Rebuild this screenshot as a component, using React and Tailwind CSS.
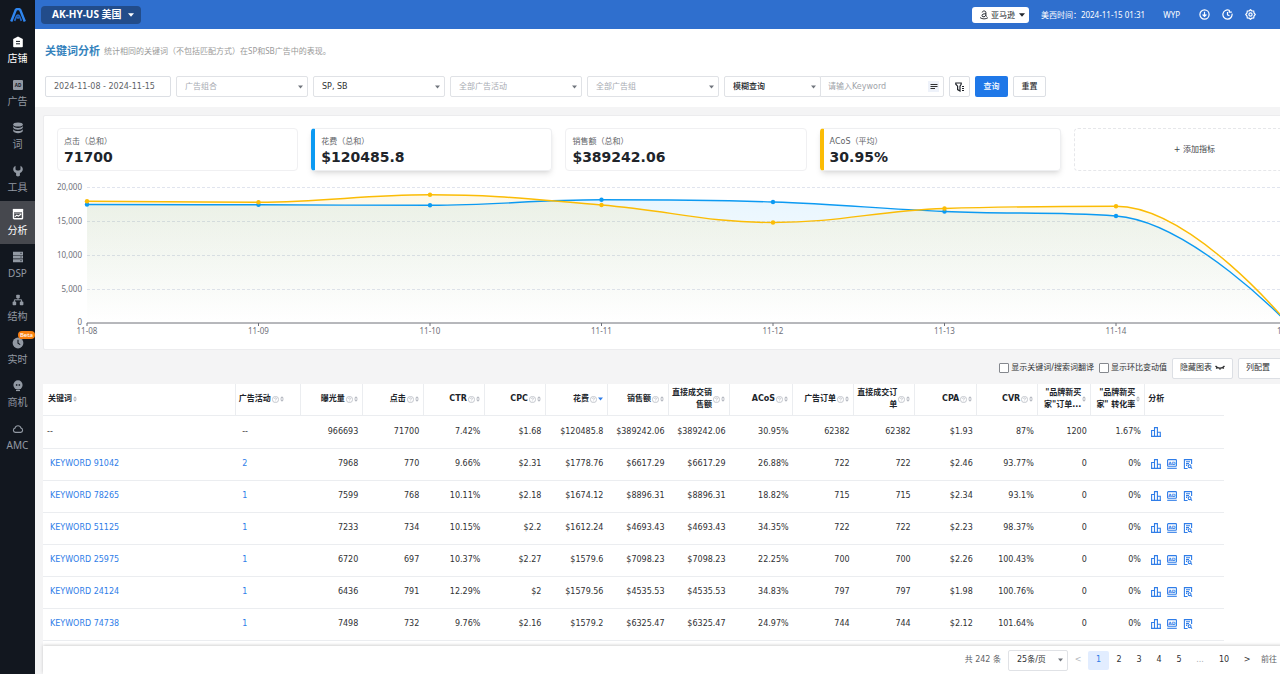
import React from "react";

const VERDANA = "font-['DejaVu_Sans','Noto_Sans_CJK_SC',sans-serif]";
const YAHEI = "font-['Noto_Sans','Noto_Sans_CJK_SC',sans-serif]";

/* ---------- icons ---------- */

const navIcons = {
  shop: (
    <>
      <path d="M6 .6 1.2 3v7.4c0 .4.3.8.8.8h8c.5 0 .8-.4.8-.8V3Z" fill="currentColor" />
      <path d="M4 5.4h4M4 7.8h4" stroke="#12171f" strokeWidth="1" />
    </>
  ),
  ad: (
    <>
      <rect x="1" y="1" width="10" height="10" rx="1" fill="currentColor" />
      <text x="6" y="7.8" fontSize="4.6" fontWeight="700" textAnchor="middle" fill="#12171f">AD</text>
    </>
  ),
  words: (
    <>
      <ellipse cx="6" cy="2.6" rx="4.8" ry="2" fill="currentColor" />
      <path d="M1.2 4c.8 1.3 2.6 1.9 4.8 1.9S10 5.300 10.800 4v1.800C10.300 7.100 8.300 7.800 6 7.800S1.700 7.100 1.200 5.800Z" fill="currentColor" />
      <path d="M1.200 7.200c.8 1.300 2.600 1.900 4.800 1.900s4-.6 4.800-1.900V9C10.300 10.400 8.300 11.200 6 11.200S1.700 10.400 1.200 9Z" fill="currentColor" />
    </>
  ),
  tools: (
    <path d="M3.500.8C2 1.500 1.200 2.800 1.200 4.200c0 1.800 1.200 3.200 2.900 3.700v2.400c0 .6.800 1.100 1.900 1.100s1.900-.5 1.900-1.100V7.900c1.700-.5 2.900-1.900 2.900-3.700 0-1.400-.8-2.700-2.300-3.400v3.600L7.200 5.400H4.800L3.500 4.400Z" fill="currentColor" />
  ),
  analysis: (
    <>
      <path d="M.8.900h10.400v2.200H.8Z" fill="currentColor" />
      <rect x="1.500" y="3.200" width="9" height="7.600" rx=".6" fill="none" stroke="currentColor" strokeWidth="1.400" />
      <path d="M2.500 5h7" stroke="currentColor" strokeWidth=".7" />
      <path d="m2.800 8.900 2-1.700 1.600 1 2.800-2.200" fill="none" stroke="currentColor" strokeWidth="1.100" />
    </>
  ),
  dsp: (
    <>
      <path d="M1 .8h10v3.100H1ZM1 4.500h10v3.100H1ZM1 8.200h10v3.100H1Z" fill="currentColor" />
      <path d="M8.300 2.300h1.400M8.300 6h1.400M8.300 9.700h1.400" stroke="#12171f" strokeWidth=".8" />
    </>
  ),
  structure: (
    <>
      <rect x="4.200" y=".8" width="3.600" height="3.400" rx=".8" fill="currentColor" />
      <rect x=".6" y="7.600" width="3.600" height="3.600" rx=".8" fill="currentColor" />
      <rect x="7.800" y="7.600" width="3.600" height="3.600" rx=".8" fill="currentColor" />
      <path d="M6 4v1.700M2.400 8V5.800h7.200V8" fill="none" stroke="currentColor" />
    </>
  ),
  realtime: (
    <>
      <circle cx="6" cy="6" r="5.400" fill="currentColor" />
      <path d="M6 2.800v3.400l2.200 1.400" fill="none" stroke="#12171f" strokeWidth="1.100" />
    </>
  ),
  chance: (
    <>
      <circle cx="6" cy="4.900" r="4.600" fill="currentColor" />
      <path d="M4 9.900h4v1.200H4Z" fill="currentColor" />
      <path d="M3.600 5 4.700 3.900 5.800 5 4.700 6.100ZM6.200 5l1.100-1.100L8.400 5 7.300 6.100Z" fill="#12171f" />
    </>
  ),
  cloud: (
    <path d="M3.300 9.400a2.200 2.200 0 0 1-.3-4.300 3.100 3.100 0 0 1 6 0 2.200 2.200 0 0 1-.3 4.300Z" fill="none" stroke="currentColor" strokeWidth="1.100" />
  ),
};

const navItems = [
  { icon: "shop", label: "店铺", tone: "text-white" },
  { icon: "ad", label: "广告", tone: "text-[#9299a3]" },
  { icon: "words", label: "词", tone: "text-[#9299a3]" },
  { icon: "tools", label: "工具", tone: "text-[#9299a3]" },
  { icon: "analysis", label: "分析", tone: "bg-[#46484e] text-white" },
  { icon: "dsp", label: "DSP", tone: "text-[#9299a3]" },
  { icon: "structure", label: "结构", tone: "text-[#9299a3]" },
  { icon: "realtime", label: "实时", tone: "text-[#9299a3]", badge: "Beta" },
  { icon: "chance", label: "商机", tone: "text-[#9299a3]" },
  { icon: "cloud", label: "AMC", tone: "text-[#9299a3]" },
];

function Caret({ className }) {
  return (
    <svg viewBox="0 0 6 4" className={className} aria-hidden="true">
      <path d="M0 .3h6L3 3.700Z" fill="currentColor" />
    </svg>
  );
}

function HelpIcon() {
  return (
    <svg viewBox="0 0 14 14" className="size-[7px] shrink-0 text-[#b4b8c0]" fill="none" stroke="currentColor" strokeWidth="1.500" aria-hidden="true">
      <circle cx="7" cy="7" r="6.200" />
      <path d="M5 5.600C5 4.400 5.900 3.700 7 3.700s2 .7 2 1.700c0 1.300-2 1.400-2 2.900M7 9.400v1.300" />
    </svg>
  );
}

function SortIcon({ active }) {
  return active ? (
    <Caret className="h-1 w-[5px] shrink-0 text-[#2f7de8]" />
  ) : (
    <svg viewBox="0 0 4 6" className="h-[6px] w-1 shrink-0 text-[#b4b8c0]" aria-hidden="true">
      <path d="M0 2.600 2 .3l2 2.300ZM0 3.400h4L2 5.700Z" fill="currentColor" />
    </svg>
  );
}

function BarsIcon() {
  return (
    <svg viewBox="0 0 10 10" className="size-[10px]" fill="none" stroke="currentColor" strokeWidth="1.100" aria-hidden="true">
      <path d="M.6 9.400V3.500h2.900v5.900M3.500 9.400V.6h2.900v8.800M6.400 5.300h2.900v4.100M0 9.400h10" />
    </svg>
  );
}

function AdBoardIcon() {
  return (
    <svg viewBox="0 0 10 10" className="size-[10px]" aria-hidden="true">
      <rect x=".6" y=".6" width="8.800" height="6.600" rx=".7" fill="none" stroke="currentColor" strokeWidth="1.100" />
      <text x="5" y="5.700" fontSize="4.600" fontWeight="700" textAnchor="middle" fill="currentColor">AD</text>
      <path d="M.2 9.300h9.600" stroke="currentColor" strokeWidth="1.100" />
    </svg>
  );
}

function DocSearchIcon() {
  return (
    <svg viewBox="0 0 10 10" className="size-[10px]" fill="none" stroke="currentColor" strokeWidth="1.100" aria-hidden="true">
      <path d="M4.600 9.500H1.400V.6h7.200v4.500M3 2.800h4M3 4.600h3M3 6.400h1.200" />
      <circle cx="6.600" cy="7.200" r="1.400" />
      <path d="m7.600 8.200 1.400 1.400" />
    </svg>
  );
}

/* ---------- chrome ---------- */

function Sidebar() {
  return (
    <nav className={`flex w-[35px] shrink-0 flex-col bg-[#12171f] ${YAHEI}`}>
      <a href="#home" aria-label="首页" className="flex h-[29px] items-center justify-center">
        <svg viewBox="0 0 16 14" className="h-[14px] w-4" fill="none" aria-hidden="true">
          <path d="M1.200 13.500 5.700 2Q6.300 1.100 7.400 1.100h1.200q1.100 0 1.700.9l4.500 11.500" stroke="#2f86f0" strokeWidth="2.400" />
          <path d="m4.600 12.800 2.100-5q1.300-1.500 2.600 0l2.100 5" stroke="#2368c8" strokeWidth="1.700" />
          <path d="M8 8.500v2.200" stroke="#2f86f0" strokeWidth="1.500" />
        </svg>
      </a>
      {navItems.map((n) => (
        <a
          key={n.label}
          href={`#${n.icon}`}
          className={`relative flex h-[43px] flex-col items-center justify-center gap-[3px] text-[10px] leading-[15px] ${n.tone}`}
        >
          <svg viewBox="0 0 12 12" className="size-3" aria-hidden="true">{navIcons[n.icon]}</svg>
          {n.label}
          {n.badge && (
            <span className="absolute top-[1px] right-0 rounded-full bg-[#f77f0e] px-[2px] text-[6px] leading-2 font-medium text-white">{n.badge}</span>
          )}
        </a>
      ))}
    </nav>
  );
}

function Header() {
  return (
    <header className={`flex h-[29px] shrink-0 items-center bg-[#2f6fce] pr-[81px] pl-[6px] text-[8px] text-white shadow-sm ${YAHEI}`}>
      <button className="flex h-[18px] items-center gap-[6px] rounded bg-[#224c8a] pr-[7px] pl-[11px] text-[10px] font-bold">
        AK-HY-US 美国
        <Caret className="h-1 w-[6px]" />
      </button>
      <button className="ml-auto flex h-4 items-center gap-[2px] rounded-[3px] bg-white px-1 pl-[7px] text-[#20252d]">
        <svg viewBox="0 0 10 10" className="size-[10px]" fill="none" stroke="currentColor" aria-hidden="true">
          <path d="M3.200 2.400C3.500 1.300 4.200 1 5.100 1c1.200 0 1.800.6 1.800 1.600v3.200l.7.8M6.900 3.800c-2.400-.1-3.900.4-3.900 1.800 0 1.700 3.100 1.700 3.900-.4" />
          <path d="M1 7.600c2.500 1.700 5.500 1.700 8 .1" strokeWidth=".9" />
        </svg>
        亚马逊
        <Caret className="ml-[2px] h-1 w-[6px]" />
      </button>
      <span className="ml-3 whitespace-pre">美西时间：2024-11-15 01:31</span>
      <span className="ml-[18px]">WYP</span>
      <div className="ml-[19px] flex gap-3">
        <button aria-label="下载">
          <svg viewBox="0 0 11 11" className="size-[11px]" fill="none" stroke="currentColor" strokeWidth="1.200" aria-hidden="true">
            <circle cx="5.500" cy="5.500" r="4.600" />
            <path d="M5.500 2.700v4.600M3.600 5.500l1.900 2 1.900-2" />
          </svg>
        </button>
        <button aria-label="历史">
          <svg viewBox="0 0 11 11" className="size-[11px]" fill="none" stroke="currentColor" strokeWidth="1.200" aria-hidden="true">
            <path d="M7.300 1.300a4.600 4.600 0 1 0 2.700 3.400M5.500 3v2.900l2 .9M7.300 1v2.200h2.500" />
          </svg>
        </button>
        <button aria-label="设置">
          <svg viewBox="0 0 11 11" className="size-[11px]" fill="none" stroke="currentColor" strokeWidth="1.200" aria-hidden="true">
            <path d="m5.500.7 1.300 1.100 1.900.2.300 1.900 1.300 1.600L9 7.100 8.700 9l-1.900.2-1.300 1.100-1.300-1.100L2.300 9 2 7.100.7 5.500 2 3.900 2.300 2l1.900-.2Z" />
            <circle cx="5.500" cy="5.500" r="1.600" />
          </svg>
        </button>
      </div>
    </header>
  );
}

/* ---------- filters ---------- */

function FilterSelect({ label, value, tone, size }) {
  return (
    <div className={`relative flex h-[21px] items-center ${size}`}>
      <select
        aria-label={label}
        defaultValue={value}
        className={`h-full w-full appearance-none rounded-[2px] border border-[#e0e2e6] bg-white pr-4 pl-2 text-[8px] outline-none ${tone}`}
      >
        <option>{value}</option>
      </select>
      <Caret className="pointer-events-none absolute right-[5px] h-1 w-[5px] text-[#70757d]" />
    </div>
  );
}

function Filters() {
  return (
    <section className="bg-white px-[10px] pt-[14px] pb-[10px]">
      <div className={`flex h-4 items-center gap-1 ${YAHEI}`}>
        <h1 className="text-[11px] font-bold text-[#3583bd]">关键词分析</h1>
        <p className="text-[8px] text-[#999]">统计相同的关键词（不包括匹配方式）在SP和SB广告中的表现。</p>
      </div>
      <div className="mt-[17px] flex gap-[5px] text-[8px]">
        <input
          aria-label="日期范围"
          defaultValue="2024-11-08 - 2024-11-15"
          className="h-[21px] w-[126px] rounded-[2px] border border-[#dcdfe4] bg-white px-2 text-[#606266] outline-none"
        />
        <FilterSelect label="广告组合" value="广告组合" tone="text-[#a8abb2]" size="w-[132px]" />
        <FilterSelect label="广告类型" value="SP, SB" tone="text-[#303133]" size="w-[132px]" />
        <FilterSelect label="广告活动" value="全部广告活动" tone="text-[#a8abb2]" size="w-[132px]" />
        <FilterSelect label="广告组" value="全部广告组" tone="text-[#a8abb2]" size="w-[132px]" />
        <div className="flex">
          <FilterSelect label="查询方式" value="模糊查询" tone="font-medium text-[#20242a]" size="w-[97px]" />
          <div className="-ml-px flex h-[21px] w-[124px] items-center rounded-r-[2px] border border-[#e0e2e6] pr-1 pl-[7px]">
            <input aria-label="关键词" placeholder="请输入Keyword" className="min-w-0 flex-1 outline-none placeholder:text-[#a0a3a9]" />
            <button aria-label="批量输入" className="flex size-[11px] items-center justify-center bg-[#eef2fa] text-[#303133]">
              <svg viewBox="0 0 8 8" className="size-2" stroke="currentColor" aria-hidden="true">
                <path d="M.5 1.500h7M.5 3.500h7M.5 5.500h4.500" />
              </svg>
            </button>
          </div>
        </div>
        <button aria-label="更多筛选" className="flex h-[21px] w-[21px] items-center justify-center rounded-[2px] border border-[#dcdfe4] text-[#20242a]">
          <svg viewBox="0 0 10 10" className="size-[10px]" fill="none" stroke="currentColor" strokeWidth="1.200" aria-hidden="true">
            <path d="M.8 1h5.400v1.200L5 4.200v4.800L2.600 7.600V4.200L.8 2.200Z" />
            <path d="M7 4.500h2M7 6.500h2M7 8.500h2" />
          </svg>
        </button>
        <button className="h-[21px] w-[33px] rounded-[2px] bg-[#1f78e8] font-medium text-white">查询</button>
        <button className="h-[21px] w-[33px] rounded-[2px] border border-[#dcdfe4] font-medium text-[#303133]">重置</button>
      </div>
    </section>
  );
}

/* ---------- metrics and chart ---------- */

const metrics = [
  { label: "点击（总和）", value: "71700", look: "border border-[#f0f0f2] pl-[6px]" },
  { label: "花费（总和）", value: "$120485.8", look: "border-y border-r border-l-4 border-[#eeeff1] border-l-[#0c9af2] pl-[6px] shadow-md" },
  { label: "销售额（总和）", value: "$389242.06", look: "border border-[#f0f0f2] pl-[6px]" },
  { label: "ACoS（平均）", value: "30.95%", look: "border-y border-r border-l-4 border-[#eeeff1] border-l-[#fbbc05] pl-[6px] shadow-md" },
];

const days = ["11-08", "11-09", "11-10", "11-11", "11-12", "11-13", "11-14", "11-15"];
const LEFT = 43;
const STEP = 171.5;
const BASE = 152;
const spendY = [33.5, 33.8, 34.3, 28.8, 31, 40.5, 45, BASE];
const acosY = [30.3, 31.2, 23.8, 34, 51.5, 37.5, 35.3, BASE];

const clamp = (v, a, b) => Math.min(Math.max(v, Math.min(a, b)), Math.max(a, b));

// Bézier smoothing that keeps every control point between its neighbours.
function smoothPath(ys) {
  const pts = ys.map((y, i) => [LEFT + i * STEP, y]);
  let d = `M${pts[0][0]} ${pts[0][1]}`;
  let c0 = pts[0];
  for (let i = 1; i < pts.length; i++) {
    const [px, py] = pts[i - 1];
    const [x, y] = pts[i];
    let c1 = [x, y];
    let next = [x, y];
    if (i < pts.length - 1) {
      const [nx, ny] = pts[i + 1];
      const lp = Math.hypot(x - px, y - py);
      const ln = Math.hypot(nx - x, ny - y);
      const r = ln / (ln + lp);
      const ax = clamp(x + (nx - px) * 0.4 * r, x, nx);
      const ay = clamp(y + (ny - py) * 0.4 * r, y, ny);
      c1 = [clamp(x - ((ax - x) * lp) / ln, px, x), clamp(y - ((ay - y) * lp) / ln, py, y)];
      next = [clamp(x + ((x - c1[0]) * ln) / lp, x, nx), clamp(y + ((y - c1[1]) * ln) / lp, y, ny)];
    }
    d += `C${c0[0]} ${c0[1]} ${c1[0]} ${c1[1]} ${x} ${y}`;
    c0 = next;
  }
  return d;
}

const series = [
  { ys: spendY, color: "#0c9af2", fill: "url(#spendFill)" },
  { ys: acosY, color: "#fbbc05", fill: "url(#acosFill)" },
];

function TrendChart() {
  const grid = [
    ["20,000", 16.5],
    ["15,000", 50.5],
    ["10,000", 84.5],
    ["5,000", 118.5],
    ["0", BASE],
  ];
  return (
    <svg viewBox="0 0 1284 178" className={`w-full text-[8px] ${YAHEI}`} role="img" aria-label="花费与ACoS趋势">
      <defs>
        <linearGradient id="spendFill" x1="0" y1="0" x2="0" y2="1">
          <stop offset="0" stopColor="#0c9af2" stopOpacity=".09" />
          <stop offset="1" stopColor="#0c9af2" stopOpacity="0" />
        </linearGradient>
        <linearGradient id="acosFill" x1="0" y1="0" x2="0" y2="1">
          <stop offset="0" stopColor="#fbbc05" stopOpacity=".1" />
          <stop offset="1" stopColor="#fbbc05" stopOpacity="0" />
        </linearGradient>
      </defs>
      {grid.map(([label, y]) => (
        <g key={label}>
          {y !== BASE && <path d={`M${LEFT} ${y}H1260`} stroke="#e0e4ee" strokeDasharray="3 2" />}
          <text x="38" y={y + 2} textAnchor="end" fill="#6e7079">{label}</text>
        </g>
      ))}
      {series.map((s) => (
        <path key={s.color} d={`${smoothPath(s.ys)}V${BASE}H${LEFT}Z`} fill={s.fill} />
      ))}
      {series.map((s) => (
        <g key={s.color}>
          <path d={smoothPath(s.ys)} fill="none" stroke={s.color} strokeWidth="1.400" />
          {s.ys.map((y, i) => (
            <circle key={i} cx={LEFT + i * STEP} cy={y} r="2.200" fill={s.color} />
          ))}
        </g>
      ))}
      <path d={`M${LEFT} ${BASE}H1260`} stroke="#6e7079" />
      {days.map((day, i) => (
        <g key={day}>
          <path d={`M${LEFT + i * STEP} ${BASE}v3`} stroke="#6e7079" />
          <text x={LEFT + i * STEP} y="163" textAnchor="middle" fill="#6e7079">{day}</text>
        </g>
      ))}
    </svg>
  );
}

function Overview() {
  return (
    <section className="rounded-[2px] border border-[#ececee] bg-white">
      <div className="grid grid-cols-5 gap-[13px] px-[13px] pt-3">
        {metrics.map((m) => (
          <div key={m.label} className={`flex h-[43px] flex-col justify-center rounded ${m.look}`}>
            <span className="mt-[2px] text-[8px] leading-3 text-[#606266]">{m.label}</span>
            <strong className="text-[14px] leading-[18px] text-[#20242a]">{m.value}</strong>
          </div>
        ))}
        <button className="h-[43px] rounded border border-dashed border-[#e6e7ea] text-[8px] text-[#40444a]">+ 添加指标</button>
      </div>
      <TrendChart />
    </section>
  );
}

/* ---------- table ---------- */

const columns = [
  { label: "关键词", w: "w-[192px]", left: true },
  { label: "广告活动", w: "w-[65px]", left: true, help: true },
  { label: "曝光量", w: "w-[62px]", help: true },
  { label: "点击", w: "w-[61px]", help: true },
  { label: "CTR", w: "w-[61px]", help: true },
  { label: "CPC", w: "w-[61px]", help: true },
  { label: "花费", w: "w-[62px]", help: true, active: true },
  { label: "销售额", w: "w-[61px]", help: true },
  { label: "直接成交销售额", w: "w-[61px]", help: true },
  { label: "ACoS", w: "w-[63px]", help: true },
  { label: "广告订单", w: "w-[61px]", help: true },
  { label: "直接成交订单", w: "w-[61px]", help: true },
  { label: "CPA", w: "w-[62px]", help: true },
  { label: "CVR", w: "w-[61px]", help: true },
  { label: '"品牌新买家"订单...', w: "w-[53px]" },
  { label: '"品牌新买家" 转化率', w: "w-[54px]" },
];

const rows = [
  ["--", "--", "966693", "71700", "7.42%", "$1.68", "$120485.8", "$389242.06", "$389242.06", "30.95%", "62382", "62382", "$1.93", "87%", "1200", "1.67%"],
  ["KEYWORD 91042", "2", "7968", "770", "9.66%", "$2.31", "$1778.76", "$6617.29", "$6617.29", "26.88%", "722", "722", "$2.46", "93.77%", "0", "0%"],
  ["KEYWORD 78265", "1", "7599", "768", "10.11%", "$2.18", "$1674.12", "$8896.31", "$8896.31", "18.82%", "715", "715", "$2.34", "93.1%", "0", "0%"],
  ["KEYWORD 51125", "1", "7233", "734", "10.15%", "$2.2", "$1612.24", "$4693.43", "$4693.43", "34.35%", "722", "722", "$2.23", "98.37%", "0", "0%"],
  ["KEYWORD 25975", "1", "6720", "697", "10.37%", "$2.27", "$1579.6", "$7098.23", "$7098.23", "22.25%", "700", "700", "$2.26", "100.43%", "0", "0%"],
  ["KEYWORD 24124", "1", "6436", "791", "12.29%", "$2", "$1579.56", "$4535.53", "$4535.53", "34.83%", "797", "797", "$1.98", "100.76%", "0", "0%"],
  ["KEYWORD 74738", "1", "7498", "732", "9.76%", "$2.16", "$1579.2", "$6325.47", "$6325.47", "24.97%", "744", "744", "$2.12", "101.64%", "0", "0%"],
];

function KeywordTable() {
  return (
    <div className="flex-1 overflow-hidden bg-white">
      <table className="w-[1181px] table-fixed border-collapse text-[8px] text-[#303133]">
        <thead>
          <tr className="h-[31px] border-b border-[#ebedf0]">
            {columns.map((c, i) => (
              <th key={c.label} className={`border-r border-[#ebedf0] py-0 pr-1 text-[#20242a] ${i === 0 ? "pl-[5px]" : "pl-[3px]"} ${c.w}`}>
                <div className={`flex items-center gap-px ${c.left ? "text-left" : "justify-end text-right"}`}>
                  <span className="leading-3">{c.label}</span>
                  {c.help && <HelpIcon />}
                  <SortIcon active={c.active} />
                </div>
              </th>
            ))}
            <th className="w-[79px] px-[3px] py-0 text-left text-[#20242a]">分析</th>
          </tr>
        </thead>
        <tbody>
          {rows.map((r, i) => (
            <tr key={r[0]} className={`border-b border-[#ebedf0] ${i === 0 ? "h-[33px]" : "h-8"}`}>
              {r.map((v, j) => (
                <td key={j} className={`py-0 ${j > 1 ? "pr-1 text-right" : i === 0 && j === 0 ? "pl-1" : "pl-[7px]"}`}>
                  {i > 0 && j < 2 ? <a href="#detail" className="text-[#2f7de8]">{v}</a> : v}
                </td>
              ))}
              <td className="py-0 pl-[6px]">
                <div className="flex gap-[6px] text-[#2f7de8]">
                  <button aria-label="趋势"><BarsIcon /></button>
                  {i > 0 && <button aria-label="广告"><AdBoardIcon /></button>}
                  {i > 0 && <button aria-label="搜索词"><DocSearchIcon /></button>}
                </div>
              </td>
            </tr>
          ))}
        </tbody>
      </table>
    </div>
  );
}

function TableTools() {
  const box = "size-[10px] appearance-none rounded-[1px] border border-[#85888e] bg-white";
  return (
    <div className="flex h-5 items-center justify-end gap-[5px] text-[8px] text-[#303133]">
      <label className="flex items-center gap-[2px]">
        <input type="checkbox" className={box} />
        显示关键词/搜索词翻译
      </label>
      <label className="flex items-center gap-[2px]">
        <input type="checkbox" className={box} />
        显示环比变动值
      </label>
      <button className="flex h-[21px] items-center gap-[3px] rounded-[2px] border border-[#dcdfe4] bg-white px-[7px]">
        隐藏图表
        <svg viewBox="0 0 10 6" className="h-[6px] w-[10px]" fill="none" stroke="currentColor" strokeWidth="1.300" aria-hidden="true">
          <path d="M.5 1c2.500 3 6.500 3 9 0M2.200 2.400 1.300 3.700M5 3.200v1.600M7.800 2.400l.9 1.300" />
        </svg>
      </button>
      <button className="h-[21px] w-[91px] rounded-[2px] border border-[#dcdfe4] bg-white px-[7px] text-left">列配置</button>
    </div>
  );
}

function Pagination() {
  return (
    <footer className="z-10 ml-2 flex h-7 shrink-0 items-center justify-end bg-white pr-2 text-[8px] text-[#303133] shadow-[0_-1px_3px_rgba(0,0,0,0.18)]">
      <span className="mr-[7px] text-[#606266]">共 242 条</span>
      <FilterSelect label="每页条数" value="25条/页" tone="text-[#303133]" size="w-[60px]" />
      <button aria-label="上一页" className="w-5 text-[#b4b8c0]">&lt;</button>
      <button aria-current="page" className="h-[19px] w-[21px] rounded-[2px] bg-[#e2edff] text-[#2f7de8]">1</button>
      {["2", "3", "4", "5"].map((p) => (
        <button key={p} className="w-5">{p}</button>
      ))}
      <span className="w-[22px] text-center text-[#a8abb2]">...</span>
      <button className="w-[26px]">10</button>
      <button aria-label="下一页" className="w-5">&gt;</button>
      <label className="ml-1 flex items-center gap-2 text-[#606266]">
        前往
        <input defaultValue="1" className="h-[19px] w-11 rounded-[2px] border border-[#e0e2e6] text-center" />
      </label>
    </footer>
  );
}

export default function App() {
  return (
    <div className={`flex h-screen overflow-hidden bg-[#f4f4f5] ${VERDANA}`}>
      <Sidebar />
      <div className="flex min-w-[1302px] flex-1 flex-col">
        <Header />
        <Filters />
        <main className="flex min-h-0 flex-1 flex-col px-2 pt-2">
          <Overview />
          <div className="pt-2 pb-[6px]"><TableTools /></div>
          <KeywordTable />
        </main>
        <Pagination />
      </div>
    </div>
  );
}
